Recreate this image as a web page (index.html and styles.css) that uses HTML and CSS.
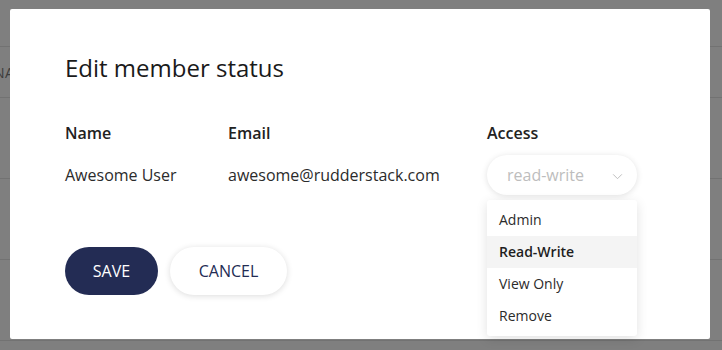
FILE: index.html
```html
<!DOCTYPE html>
<html lang="en">
<head>
  <meta charset="UTF-8">
  <title>Edit member status</title>
  <link rel="stylesheet" href="styles.css">
</head>
<body>
  <!-- Page behind the overlay -->
  <div class="backdrop">
    <div class="bg-row bg-row-top"></div>
    <div class="bg-row bg-row-head"><span class="bg-label">NAME</span></div>
    <div class="bg-row bg-row-tall"></div>
    <div class="bg-row bg-row-tall"></div>
    <div class="bg-row bg-row-tall"></div>
  </div>

  <!-- Modal -->
  <div class="modal">
    <h2 class="modal-title">Edit member status</h2>

    <div class="members">
      <div class="members-head">
        <div>Name</div>
        <div>Email</div>
        <div>Access</div>
      </div>
      <div class="members-row">
        <div>Awesome User</div>
        <div>awesome@rudderstack.com</div>
        <div class="access">
          <div class="select">
            <span class="select-value">read-write</span>
            <svg class="select-arrow" viewBox="0 0 12 8">
              <path d="M1 1.5L6 6.5L11 1.5" fill="none" stroke="#b5b5b5" stroke-width="1"></path>
            </svg>
          </div>
          <ul class="dropdown">
            <li>Admin</li>
            <li class="active">Read-Write</li>
            <li>View Only</li>
            <li>Remove</li>
          </ul>
        </div>
      </div>
    </div>

    <div class="actions">
      <button class="btn btn-primary">SAVE</button>
      <button class="btn btn-default">CANCEL</button>
    </div>
  </div>
</body>
</html>
```

FILE: styles.css
```css
/* Base */
body {
  margin: 0;
  padding: 0;
  width: 722px;
  height: 350px;
  overflow: hidden;
  background: #7f7f7f;
  font-family: 'Open Sans', 'Noto Sans', sans-serif;
  position: relative;
}

/* Background page rows */
.backdrop {
  display: flex;
  flex-direction: column;
}

.bg-row {
  border-bottom: 1px solid #727272;
}

.bg-row-top {
  height: 46px;
}

.bg-row-head {
  height: 50px;
  display: flex;
  align-items: center;
}

.bg-label {
  margin-left: -6px;
  font-size: 14px;
  color: #3c3c3c;
  letter-spacing: 0.5px;
}

.bg-row-tall {
  height: 80px;
}

/* Modal */
.modal {
  position: absolute;
  top: 9px;
  left: 10px;
  width: 700px;
  height: 330px;
  box-sizing: border-box;
  padding: 44px 55px;
  background: #fff;
  border-radius: 2px;
}

.modal-title {
  margin: 0;
  font-size: 24px;
  font-weight: 400;
  line-height: 30px;
  color: #1a1a1a;
}

/* Members table */
.members {
  margin-top: 35px;
  color: #2b2b2b;
  font-size: 16px;
}

.members-head,
.members-row {
  display: grid;
  grid-template-columns: 163px 259px 150px;
  align-items: center;
}

.members-head {
  height: 30px;
  font-weight: 600;
  color: #222;
}

.members-row {
  margin-top: 7px;
  height: 40px;
}

.access {
  position: relative;
}

.select {
  height: 40px;
  border-radius: 20px;
  background: #fff;
  box-shadow: 0 1px 6px rgba(0, 0, 0, 0.12);
  display: flex;
  align-items: center;
  justify-content: space-between;
  padding: 0 14px 0 20px;
}

.select-value {
  color: #bdbdbd;
  font-size: 16px;
}

.select-arrow {
  width: 11px;
  height: 7px;
  margin-top: 2px;
}

/* Dropdown menu */
.dropdown {
  position: absolute;
  top: 45px;
  left: 0;
  width: 150px;
  margin: 0;
  padding: 4px 0;
  list-style: none;
  background: #fff;
  border-radius: 3px;
  box-shadow: 0 3px 12px rgba(0, 0, 0, 0.12);
  z-index: 2;
}

.dropdown li {
  height: 32px;
  line-height: 32px;
  padding: 0 12px;
  font-size: 14px;
  color: #2b2b2b;
}

.dropdown li.active {
  background: #f4f4f4;
  font-weight: 600;
  color: #1e1e1e;
}

/* Buttons */
.actions {
  margin-top: 52px;
  display: flex;
  gap: 12px;
}

.btn {
  height: 48px;
  border-radius: 24px;
  border: none;
  font-family: inherit;
  font-size: 16px;
  cursor: pointer;
}

.btn-primary {
  width: 93px;
  background: #232c54;
  color: #fff;
}

.btn-default {
  width: 117px;
  background: #fff;
  color: #232c54;
  box-shadow: 0 1px 6px rgba(0, 0, 0, 0.14);
}
```
